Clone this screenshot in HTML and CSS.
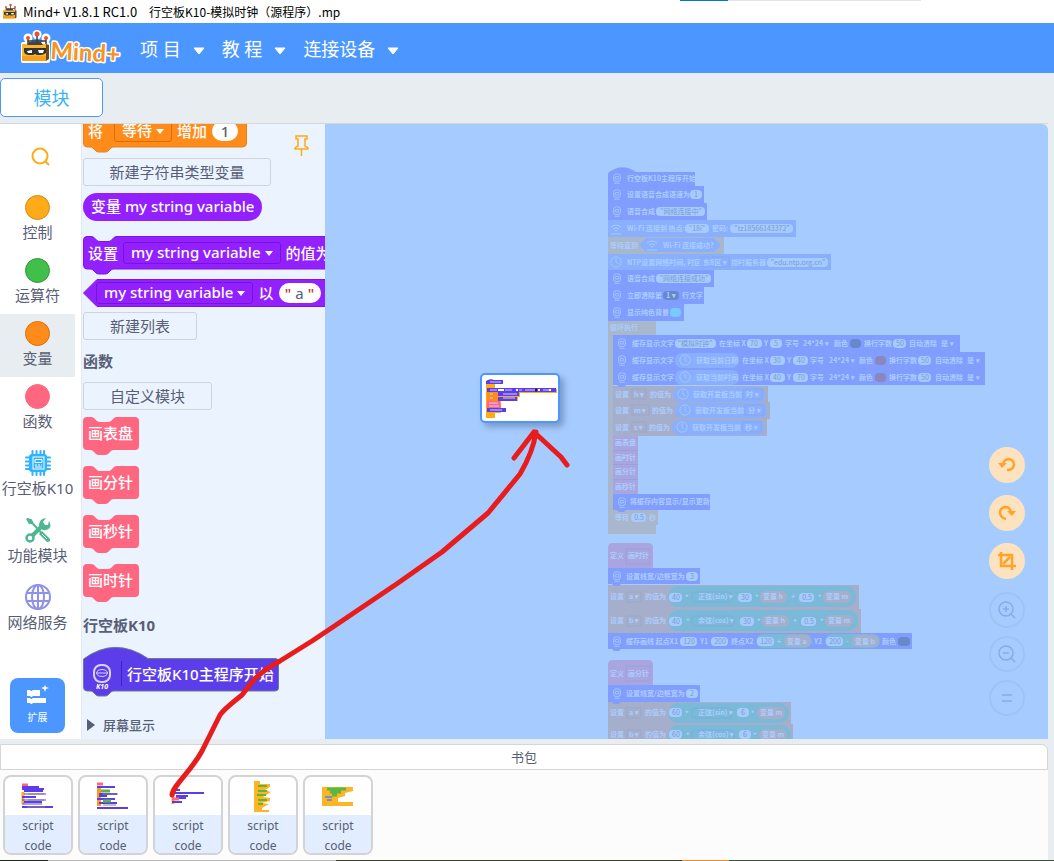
FILE: index.html
```
<!DOCTYPE html>
<html lang="zh-CN">
<head>
<meta charset="utf-8">
<title>Mind+ V1.8.1 RC1.0 行空板K10-模拟时钟（源程序）.mp</title>
<link rel="stylesheet" href="styles.css">
</head>
<body>
<svg class="defs" aria-hidden="true">
  <symbol id="robot" viewBox="0 0 32 34">
    <path d="M8 13V9M17 9V4M25 13V9" stroke="#fff" stroke-width="5"/>
    <circle cx="8" cy="8" r="4.500" fill="#fff"/><circle cx="17" cy="4.500" r="4.500" fill="#fff"/><circle cx="26" cy="8" r="4.500" fill="#fff"/>
    <rect x="1" y="12" width="29" height="21" rx="2" fill="#fff"/>
    <path d="M8 14V8M17 13V5M26 14V8M8 11h18" stroke="#3b3b3b" stroke-width="1.500" fill="none"/>
    <circle cx="8" cy="8" r="2" fill="#e9532b"/><circle cx="17" cy="4" r="2.500" fill="#e9532b"/><circle cx="26" cy="8" r="2" fill="#e9532b"/>
    <path d="M2 14h24v17H2z" fill="#fbb62b"/><path d="M26 14l3 1v14l-3 2z" fill="#6b4a20"/>
    <path d="M2 26h24v5H2z" fill="#f6a01d"/><path d="M9 12h12l2 3H7z" fill="#444"/>
    <path d="M4 18h22v5q-3 2-6 2h-3l-2-1-2 1h-4q-4 0-5-3z" fill="#333"/>
    <path d="M7 21l5-1v3H8zM18 20h6l-1 3h-4z" fill="#fff"/>
  </symbol>
  <symbol id="k10" viewBox="0 0 12 14">
    <rect x="2" y="1" width="8" height="9" rx="3" fill="none" stroke="currentColor"/>
    <path d="M4 4h4v3H4zM3 12h6" fill="none" stroke="currentColor"/>
  </symbol>
  <symbol id="clock" viewBox="0 0 12 12">
    <circle cx="6" cy="6" r="5.200" fill="none" stroke="currentColor" stroke-width=".8"/>
    <path d="M6 2v4l2 2" fill="none" stroke="currentColor" stroke-width=".8"/>
  </symbol>
  <symbol id="wifi" viewBox="0 0 12 12">
    <path d="M1 4q5-4 10 0M3 6q3-2.500 6 0M5 8q1-1 2 0M1 11h10" fill="none" stroke="currentColor"/>
  </symbol>
</svg>

<div class="titlebar">
  <svg class="app-icon" aria-hidden="true"><use href="#robot"/></svg>
  <span>Mind+ V1.8.1 RC1.0</span><span>行空板K10-模拟时钟（源程序）.mp</span>
</div>

<header class="header">
  <svg class="logo" viewBox="0 0 100 40" role="img" aria-label="Mind+">
    <use href="#robot" width="32" height="34"/>
    <text class="logo-text" x="30" y="29" transform="rotate(3 30 29)">Mind+</text>
  </svg>
  <nav class="menu">
    <button>项 目<svg class="caret" viewBox="0 0 12 8"><path d="M1 1h10L6 7z"/></svg></button>
    <button>教 程<svg class="caret" viewBox="0 0 12 8"><path d="M1 1h10L6 7z"/></svg></button>
    <button>连接设备<svg class="caret" viewBox="0 0 12 8"><path d="M1 1h10L6 7z"/></svg></button>
  </nav>
</header>

<div class="tabs"><button class="tab">模块</button></div>

<main class="editor">
  <nav class="categories">
    <button class="search" aria-label="搜索"><svg viewBox="0 0 20 20"><circle cx="9" cy="9" r="7.500"/><path d="M14 14l4 4"/></svg></button>
    <button class="category"><i class="dot control"></i>控制</button>
    <button class="category"><i class="dot operator"></i>运算符</button>
    <button class="category selected"><i class="dot variable"></i>变量</button>
    <button class="category"><i class="dot function"></i>函数</button>
    <button class="category pictured">
      <svg viewBox="0 0 26 26"><path d="M7.500 1v24M11.500 1v24M15.500 1v24M19 1v24M1 7.500h24M1 11.500h24M1 15.500h24M1 19h24" stroke="#2fb3ff" stroke-width="2" stroke-linecap="round"/><rect x="4" y="4" width="18" height="18" rx="3" fill="#2fb3ff"/><rect x="8" y="7" width="11" height="12" fill="none" stroke="#fff"/><path d="M10 9.500h7v3h-7zM10 15h2m1 0h2m1 0h1M10 17h7" fill="none" stroke="#fff"/></svg>行空板K10</button>
    <button class="category pictured">
      <svg viewBox="0 0 26 26"><path d="M2 2l4 1 2 4 12 13" fill="none" stroke="#4db890" stroke-width="2"/><path d="M1 2l2-1 4 3v3H4z" fill="#4db890"/><path d="M14 17l3-3 8 8q1 3-3 3z" fill="#4db890"/><path d="M5 21L18 8" stroke="#4db890" stroke-width="4"/><path d="M24 4q4 7-3 9-6 1-7-5 0-6 7-7l-3 4 2 3h3z" fill="#4db890"/><circle cx="5" cy="21" r="3.500" fill="#fff" stroke="#4db890" stroke-width="2.500"/><path d="M17 17l5 5" stroke="#fff"/></svg>功能模块</button>
    <button class="category pictured">
      <svg viewBox="0 0 26 26" fill="none" stroke="#8f92ea" stroke-width="2"><circle cx="13" cy="13" r="12"/><ellipse cx="13" cy="13" rx="6" ry="12"/><path d="M13 1v24M2 9h22M2 17h22"/></svg>网络服务</button>
    <button class="extension">
      <svg viewBox="0 0 24 20" fill="#fff"><path d="M1 5h3q1 2 3 0h7v6H7q-2 2-3 0H1zM1 13h3q1 2 3 0h13v5H7q-2 2-3 0H1z"/><path d="M19 0l1 2 3 1-3 1-1 3-1-3-3-1 3-1z"/></svg>扩展</button>
  </nav>

  <section class="flyout">
    <div class="block change">
      <svg class="shape" width="164" height="39"><path fill="#ff8c1a" stroke="#f08010" d="M.5 0H163.500V29q0 4-4 4H31q-2 0-3 1l-3 3q-1 1-3 1h-6q-2 0-3-1l-3-3q-1-1-3-1H4q-3.500 0-3.500-4z"/></svg>
      <span>将</span><button class="field">等待<svg viewBox="0 0 8 5"><path d="M0 0h8L4 5z"/></svg></button><span>增加</span><input class="pill number" aria-label="增加" value="1">
    </div>
    <button class="make wide">新建字符串类型变量</button>
    <div class="block reporter">变量 my string variable</div>
    <div class="block set">
      <svg class="shape" width="300" height="39"><path fill="#9320ff" stroke="#7f14e4" d="M.5 4Q.5.5 4 .5h4q2 0 3 1l3 3q1 1 3 1h8q2 0 3-1l3-3q1-1 3-1H299.500V33H31q-2 0-3 1l-3 3q-1 1-3 1h-6q-2 0-3-1l-3-3q-1-1-3-1H4q-3.500 0-3.500-4z"/></svg>
      <span>设置</span><button class="field">my string variable<svg viewBox="0 0 8 5"><path d="M0 0h8L4 5z"/></svg></button><span>的值为</span>
    </div>
    <div class="block join">
      <svg class="shape" width="300" height="28"><path fill="#9320ff" stroke="#7f14e4" d="M.5 14L14 .5H299V27.500H14z"/></svg>
      <button class="field">my string variable<svg viewBox="0 0 8 5"><path d="M0 0h8L4 5z"/></svg></button><span>以</span><span class="pill string"><b>"</b>a<b>"</b></span>
    </div>
    <button class="make">新建列表</button>
    <h2>函数</h2>
    <button class="make middle">自定义模块</button>
    <div class="block call"><svg class="shape" width="56" height="39"><path id="call-shape" fill="#ff6680" d="M0 4Q0 0 4 0h4q2 0 3 1l3 3q1 1 3 1h8q2 0 3-1l3-3q1-1 3-1H52q4 0 4 4V29q0 4-4 4H31q-2 0-3 1l-3 3q-1 1-3 1h-6q-2 0-3-1l-3-3q-1-1-3-1H4q-4 0-4-4z"/></svg>画表盘</div>
    <div class="block call"><svg class="shape" width="56" height="39"><use href="#call-shape"/></svg>画分针</div>
    <div class="block call"><svg class="shape" width="56" height="39"><use href="#call-shape"/></svg>画秒针</div>
    <div class="block call"><svg class="shape" width="56" height="39"><use href="#call-shape"/></svg>画时针</div>
    <h2>行空板K10</h2>
    <div class="block hat">
      <svg class="shape" width="196" height="50"><path fill="#5b3ee9" stroke="#6d7b90" d="M.5 12Q32-11 65 11.500H192q3.500 0 3.500 3V41q0 3-3.500 3H31q-2 0-3 1l-3 3q-1 1-3 1h-6q-2 0-3-1l-3-3q-1-1-3-1H4q-3.500 0-3.500-4z"/><path d="M38.500 14v25" stroke="#3f22c6"/></svg>
      <svg class="k10-mark" viewBox="0 0 20 26"><rect x="2" y="1" width="16" height="17" rx="7" fill="none" stroke="#d9d3ff" stroke-width="2"/><ellipse cx="10" cy="9" rx="5.500" ry="3.500" fill="none" stroke="#d9d3ff"/><path d="M5 9h10" stroke="#d9d3ff"/><text x="4" y="25">K10</text></svg>
      <span>行空板K10主程序开始</span>
    </div>
    <button class="fold"><svg viewBox="0 0 8 12"><path d="M0 0l8 6-8 6z"/></svg>屏幕显示</button>
    <button class="pin" aria-label="固定"><svg viewBox="0 0 16 22"><path d="M2 1h11v3h-2v7q3 1 3 3H1q0-2 3-3V4H2zM7.500 14v7"/></svg></button>
  </section>

  <section class="workspace">
    <svg class="scripts" width="722" height="615" viewBox="326 124 722 615">
      <g transform="translate(608 167)"><path class="k" d="M0 6Q14-5 28 5H87V20H0z"/><use href="#k10" x="3" y="6" width="12" height="12"/><text x="19" y="14">行空板K10主程序开始</text></g>
      <g transform="translate(608 186)"><path class="k" d="M0 0H96V17H0z"/><use href="#k10" x="3" y="3" width="12" height="12"/><text x="19" y="11">设置语音合成语速为</text><rect class="i" x="82" y="4" width="12" height="9" rx="4"/><text class="v" x="88" y="11">1</text></g>
      <g transform="translate(608 203)"><path class="k" d="M0 0H99V17H0z"/><use href="#k10" x="3" y="3" width="12" height="12"/><text x="19" y="11">语音合成</text><rect class="i" x="48" y="4" width="49" height="9" rx="4"/><text class="v" x="73" y="11">"网络连接中"</text></g>
      <g transform="translate(608 220)"><path class="w" d="M0 0H188V17H0z"/><use href="#wifi" x="2" y="3" width="12" height="12"/><text x="19" y="11">Wi-Fi 连接到 热点:</text><rect class="i" x="77" y="4" width="24" height="9" rx="4"/><text class="v" x="89" y="11">"18i"</text><text x="104" y="11">密码:</text><rect class="i" x="122" y="4" width="63" height="9" rx="4"/><text class="v" x="154" y="11">"tz18566143372"</text></g>
      <g transform="translate(608 237)"><path class="c" d="M0 0H116V17H0z"/><text x="2" y="11">等待直到</text><path class="w" d="M31 8l7-7h68l7 7-7 7H38z"/><use href="#wifi" x="38" y="2" width="12" height="12"/><text x="55" y="11">Wi-Fi 连接成功?</text></g>
      <g transform="translate(608 254)"><path class="w" d="M0 0H223V16H0z"/><use href="#clock" x="2" y="2" width="12" height="12"/><text x="19" y="11">NTP设置网络时间, 时区</text><rect class="f" x="92" y="3" width="29" height="10"/><text x="95" y="11">东8区 ▾</text><text x="123" y="11">授时服务器</text><rect class="i" x="159" y="4" width="61" height="9" rx="4"/><text class="v" x="190" y="11">"edu.ntp.org.cn"</text></g>
      <g transform="translate(608 270)"><path class="k" d="M0 0H106V17H0z"/><use href="#k10" x="3" y="3" width="12" height="12"/><text x="19" y="11">语音合成</text><rect class="i" x="48" y="4" width="55" height="9" rx="4"/><text class="v" x="76" y="11">"网络连接成功"</text></g>
      <g transform="translate(608 287)"><path class="k" d="M0 0H96V17H0z"/><use href="#k10" x="3" y="3" width="12" height="12"/><text x="19" y="11">立即清除第</text><rect class="d" x="55" y="4" width="16" height="9" rx="4"/><text x="58" y="11">1 ▾</text><text x="74" y="11">行文字</text></g>
      <g transform="translate(608 304)"><path class="k" d="M0 0H76V17H0z"/><use href="#k10" x="3" y="3" width="12" height="12"/><text x="19" y="11">显示纯色背景</text><rect fill="#78cbff" x="62" y="4" width="11" height="9" rx="4"/></g>
      <path class="c" d="M608 321h48v14H613v189h43v10H608z"/><text x="610" y="330">循环执行</text>

      <g transform="translate(613 335)"><path class="k" d="M0 0H347V17H0z"/><use href="#k10" x="3" y="3" width="12" height="12"/><text x="19" y="11">缓存显示文字</text><rect class="i" x="62" y="4" width="41" height="9" rx="4"/><text class="v" x="82" y="11">"模拟时钟"</text><text x="106" y="11">在坐标 X</text><rect class="i" x="134" y="4" width="15" height="9" rx="4"/><text class="v" x="141" y="11">70</text><text x="151" y="11">Y</text><rect class="i" x="157" y="4" width="12" height="9" rx="4"/><text class="v" x="163" y="11">5</text><text x="172" y="11">字号</text><text x="190" y="11">24*24 ▾</text><text x="221" y="11">颜色</text><rect class="d" x="237" y="4" width="11" height="9" rx="4"/><text x="251" y="11">换行字数</text><rect class="i" x="280" y="4" width="13" height="9" rx="4"/><text class="v" x="287" y="11">50</text><text x="296" y="11">自动清除</text><text x="328" y="11">是 ▾</text></g>
      <g transform="translate(613 352)"><path class="k" d="M0 0H372V17H0z"/><use href="#k10" x="3" y="3" width="12" height="12"/><text x="19" y="11">缓存显示文字</text><rect class="w" x="62" y="1" width="64" height="15" rx="7"/><use href="#clock" x="66" y="2" width="12" height="12"/><text x="83" y="11">获取当前日期</text><text x="129" y="11">在坐标 X</text><rect class="i" x="157" y="4" width="15" height="9" rx="4"/><text class="v" x="164" y="11">30</text><text x="174" y="11">Y</text><rect class="i" x="180" y="4" width="15" height="9" rx="4"/><text class="v" x="188" y="11">40</text><text x="197" y="11">字号</text><text x="216" y="11">24*24 ▾</text><text x="246" y="11">颜色</text><rect class="r" x="262" y="4" width="11" height="9" rx="4"/><text x="276" y="11">换行字数</text><rect class="i" x="305" y="4" width="13" height="9" rx="4"/><text class="v" x="312" y="11">50</text><text x="322" y="11">自动清除</text><text x="354" y="11">是 ▾</text></g>
      <g transform="translate(613 386)"><path class="a" d="M0 0H155V17H0z"/><text x="2" y="11">设置</text><rect class="f" x="19" y="3" width="14" height="10"/><text x="21" y="11">h ▾</text><text x="37" y="11">的值为</text><rect class="w" x="60" y="1" width="92" height="15" rx="7"/><use href="#clock" x="64" y="2" width="12" height="12"/><text x="80" y="11">获取开发板当前</text><rect class="f" x="130" y="3" width="19" height="10"/><text x="133" y="11">时 ▾</text></g>
      <g transform="translate(613 369)"><path class="k" d="M0 0H372V16H13l-2 2H6l-2-2H0z"/><use href="#k10" x="3" y="3" width="12" height="12"/><text x="19" y="11">缓存显示文字</text><rect class="w" x="62" y="1" width="64" height="15" rx="7"/><use href="#clock" x="66" y="2" width="12" height="12"/><text x="83" y="11">获取当前时间</text><text x="129" y="11">在坐标 X</text><rect class="i" x="157" y="4" width="15" height="9" rx="4"/><text class="v" x="164" y="11">40</text><text x="174" y="11">Y</text><rect class="i" x="180" y="4" width="15" height="9" rx="4"/><text class="v" x="188" y="11">70</text><text x="197" y="11">字号</text><text x="216" y="11">24*24 ▾</text><text x="246" y="11">颜色</text><rect class="r" x="262" y="4" width="11" height="9" rx="4"/><text x="276" y="11">换行字数</text><rect class="i" x="305" y="4" width="13" height="9" rx="4"/><text class="v" x="312" y="11">50</text><text x="322" y="11">自动清除</text><text x="354" y="11">是 ▾</text></g>
      <g transform="translate(613 402)"><path class="a" d="M0 0H157V17H0z"/><text x="2" y="11">设置</text><rect class="f" x="19" y="3" width="17" height="10"/><text x="21" y="11">m ▾</text><text x="39" y="11">的值为</text><rect class="w" x="62" y="1" width="92" height="15" rx="7"/><use href="#clock" x="66" y="2" width="12" height="12"/><text x="82" y="11">获取开发板当前</text><rect class="f" x="132" y="3" width="19" height="10"/><text x="135" y="11">分 ▾</text></g>
      <g transform="translate(613 419)"><path class="a" d="M0 0H154V17H0z"/><text x="2" y="11">设置</text><rect class="f" x="19" y="3" width="14" height="10"/><text x="21" y="11">s ▾</text><text x="36" y="11">的值为</text><rect class="w" x="59" y="1" width="92" height="15" rx="7"/><use href="#clock" x="63" y="2" width="12" height="12"/><text x="79" y="11">获取开发板当前</text><rect class="f" x="129" y="3" width="19" height="10"/><text x="132" y="11">秒 ▾</text></g>
      <path class="p" d="M613 436h25v58h-25z"/><path class="e" d="M613 450.500h25M613 464.500h25M613 479.500h25"/>
      <text x="615" y="445">画表盘</text><text x="615" y="460">画时针</text><text x="615" y="474">画分针</text><text x="615" y="489">画秒针</text>
      <path class="c" d="M613 510h45v15h-45z"/><text x="615" y="520">等待</text><rect class="i" x="631" y="513" width="15" height="9" rx="4"/><text class="v" x="639" y="520">0.5</text><text x="649" y="520">秒</text>
      <g transform="translate(613 494)"><path class="k" d="M0 0H97V16H13l-2 2H6l-2-2H0z"/><use href="#k10" x="3" y="3" width="12" height="12"/><text x="17" y="10">将缓存内容显示/显示更新</text></g>

      <g transform="translate(608 543)"><path class="p" d="M0 5Q0 0 5 0H40Q45 0 45 5V25H0z"/><rect class="f" x="18" y="6" width="24" height="15"/><text x="2" y="15">定义</text><text x="20" y="15">画时针</text></g>
      <g transform="translate(608 585)"><path class="a" d="M0 0H251V24H0z"/><text x="2" y="14">设置</text><rect class="f" x="19" y="7" width="14" height="10"/><text x="21" y="14">a ▾</text><text x="37" y="14">的值为</text><rect class="g" x="60" y="1" width="188" height="21" rx="10"/><rect class="i" x="61" y="8" width="13" height="9" rx="4"/><text class="v" x="68" y="15">40</text><text x="77" y="15">*</text><rect class="e" x="84" y="7" width="40" height="10" rx="3"/><text x="90" y="14">正弦(sin) ▾</text><rect class="i" x="130" y="8" width="14" height="9" rx="4"/><text class="v" x="137" y="15">30</text><text x="147" y="15">*</text><rect class="a" x="152" y="6" width="27" height="12" rx="6"/><text x="155" y="14">变量 h</text><text x="183" y="14">+</text><rect class="i" x="191" y="8" width="15" height="9" rx="4"/><text class="v" x="199" y="15">0.5</text><text x="210" y="15">*</text><rect class="a" x="215" y="6" width="28" height="12" rx="6"/><text x="218" y="14">变量 m</text></g>
      <g transform="translate(608 609)"><path class="a" d="M0 0H253V24H0z"/><text x="2" y="14">设置</text><rect class="f" x="19" y="7" width="14" height="10"/><text x="21" y="14">b ▾</text><text x="37" y="14">的值为</text><rect class="g" x="60" y="1" width="190" height="21" rx="10"/><rect class="i" x="61" y="8" width="13" height="9" rx="4"/><text class="v" x="68" y="15">40</text><text x="78" y="15">*</text><rect class="e" x="84" y="7" width="42" height="10" rx="3"/><text x="90" y="14">余弦(cos) ▾</text><rect class="i" x="132" y="8" width="14" height="9" rx="4"/><text class="v" x="139" y="15">30</text><text x="149" y="15">*</text><rect class="a" x="154" y="6" width="27" height="12" rx="6"/><text x="157" y="14">变量 h</text><text x="185" y="14">+</text><rect class="i" x="193" y="8" width="15" height="9" rx="4"/><text class="v" x="201" y="15">0.5</text><text x="212" y="15">*</text><rect class="a" x="217" y="6" width="28" height="12" rx="6"/><text x="220" y="14">变量 m</text></g>
      <g transform="translate(608 568)"><path class="k" d="M0 0H92V16H13l-2 2H6l-2-2H0z"/><use href="#k10" x="3" y="3" width="12" height="12"/><text x="18" y="11">设置线宽/边框宽为</text><rect class="i" x="78" y="4" width="12" height="9" rx="4"/><text class="v" x="84" y="11">3</text></g>
      <g transform="translate(608 633)"><path class="k" d="M0 0H304V16H13l-2 2H6l-2-2H0z"/><use href="#k10" x="3" y="3" width="12" height="12"/><text x="18" y="11">缓存画线 起点X1</text><rect class="i" x="72" y="4" width="17" height="9" rx="4"/><text class="v" x="81" y="11">120</text><text x="92" y="11">Y1</text><rect class="i" x="103" y="4" width="17" height="9" rx="4"/><text class="v" x="112" y="11">200</text><text x="123" y="11">终点X2</text><rect class="g" x="148" y="1" width="56" height="14" rx="7"/><rect class="i" x="149" y="4" width="17" height="9" rx="4"/><text class="v" x="158" y="11">120</text><text x="169" y="11">+</text><rect class="a" x="176" y="2" width="27" height="12" rx="6"/><text x="179" y="11">变量 a</text><text x="206" y="11">Y2</text><rect class="g" x="217" y="1" width="55" height="14" rx="7"/><rect class="i" x="218" y="4" width="17" height="9" rx="4"/><text class="v" x="227" y="11">200</text><text x="238" y="11">-</text><rect class="a" x="244" y="2" width="27" height="12" rx="6"/><text x="247" y="11">变量 b</text><text x="274" y="11">颜色</text><rect class="d" x="290" y="4" width="12" height="9" rx="4"/></g>

      <g transform="translate(608 660)"><path class="p" d="M0 5Q0 0 5 0H40Q45 0 45 5V26H0z"/><rect class="f" x="18" y="6" width="24" height="15"/><text x="2" y="16">定义</text><text x="20" y="16">画分针</text></g>
      <g transform="translate(608 702)"><path class="a" d="M0 0H183V22H0z"/><text x="2" y="13">设置</text><rect class="f" x="19" y="6" width="14" height="10"/><text x="21" y="13">a ▾</text><text x="37" y="13">的值为</text><rect class="g" x="60" y="1" width="121" height="20" rx="10"/><rect class="i" x="61" y="6" width="13" height="9" rx="4"/><text class="v" x="68" y="13">60</text><text x="77" y="14">*</text><rect class="e" x="84" y="6" width="40" height="10" rx="3"/><text x="90" y="13">正弦(sin) ▾</text><rect class="i" x="129" y="6" width="12" height="9" rx="4"/><text class="v" x="135" y="13">6</text><text x="143" y="14">*</text><rect class="a" x="149" y="5" width="28" height="12" rx="6"/><text x="152" y="13">变量 m</text></g>
      <g transform="translate(608 724)"><path class="a" d="M0 0H185V22H0z"/><text x="2" y="13">设置</text><rect class="f" x="19" y="6" width="14" height="10"/><text x="21" y="13">b ▾</text><text x="37" y="13">的值为</text><rect class="g" x="60" y="1" width="123" height="20" rx="10"/><rect class="i" x="61" y="6" width="13" height="9" rx="4"/><text class="v" x="68" y="13">60</text><text x="78" y="14">*</text><rect class="e" x="84" y="6" width="42" height="10" rx="3"/><text x="90" y="13">余弦(cos) ▾</text><rect class="i" x="131" y="6" width="12" height="9" rx="4"/><text class="v" x="137" y="13">6</text><text x="145" y="14">*</text><rect class="a" x="151" y="5" width="28" height="12" rx="6"/><text x="154" y="13">变量 m</text></g>
      <g transform="translate(608 685)"><path class="k" d="M0 0H92V17H13l-2 2H6l-2-2H0z"/><use href="#k10" x="3" y="3" width="12" height="12"/><text x="18" y="11">设置线宽/边框宽为</text><rect class="i" x="78" y="4" width="12" height="9" rx="4"/><text class="v" x="84" y="11">2</text></g>
    </svg>

    <div class="dragged">
      <svg width="74" height="44" viewBox="0 0 74 44">
        <path fill="#5b3ee9" d="M3 5q4-3 8-1h9v4H3z"/>
        <path fill="#ffab19" d="M3 8h9v5h62v4H37v4h-2v4H18v12H12v3H3z"/><path fill="#fff" d="M18 25h56v12H18zM37 17h37v8H37zM12 9h62v3H12z"/>
        <path fill="#5b3ee9" d="M4 12h69v4H4zM15 16h21v4H15zM15 21h19v4H15zM4 32h19v4H4z"/>
        <path fill="#ff8c1a" d="M4 16h11v9H4z"/><path fill="#ff6680" d="M4 25h13l1 7H4z"/><path fill="#ffab19" d="M3 36h9v6H3z"/>
        <path stroke="#d6d0ff" d="M7 14h7m8 0h7m7 0h3m3 0h12m6 0h8M7 6h11M7 18h3M7 22h3M6 27h9M6 30h10M7 34h12M20 18h14M20 22h12"/>
        <path stroke="#fff" stroke-width="2" d="M15 14h6m12 0h2m20 0h2m9 0h2"/><path stroke="#222" stroke-width="3" d="M52 14h2"/>
      </svg>
    </div>

    <div class="tools">
      <button aria-label="撤销"><svg viewBox="0 0 20 20"><path d="M6 9q1-5 6-5 5 1 5 6-1 5-7 5" /><path class="solid" d="M1 8h9l-5 5z"/></svg></button>
      <button aria-label="重做"><svg viewBox="0 0 20 20"><path d="M14 9q-1-5-6-5-5 1-5 6 1 5 6 6"/><path class="solid" d="M10 8h9l-4 5z"/></svg></button>
      <button aria-label="裁剪"><svg viewBox="0 0 20 20"><path d="M4 1v14h15M1 4h14v15M6 13l7-7"/></svg></button>
      <button class="zoom first" aria-label="放大"><svg viewBox="0 0 20 20"><circle cx="9" cy="9" r="7"/><path d="M14 14l4 4M6 9h6M9 6v6"/></svg></button>
      <button class="zoom" aria-label="缩小"><svg viewBox="0 0 20 20"><circle cx="9" cy="9" r="7"/><path d="M14 14l4 4M6 9h6"/></svg></button>
      <button class="zoom" aria-label="还原"><svg viewBox="0 0 20 20"><path d="M5 7h10M5 13h10"/></svg></button>
    </div>
  </section>
</main>

<section class="backpack">
  <h3>书包</h3>
  <div class="cards">
    <button class="card"><svg viewBox="0 0 66 36"><path stroke="#ff6680" stroke-width="3" d="M17 6h6"/><path stroke="#ffab19" stroke-width="3" d="M18 13v12"/><path stroke="#5b3ee9" stroke-width="2" d="M17 8h17M17 10h22M19 12h19M17 18h14M19 23h18M17 28h31"/><path stroke="#5b3ee9" d="M19 15h22M17 21h24M17 25h20"/><path stroke="#8a8478" d="M23 15h16M23 21h16M22 28h18"/></svg><span>script<br>code</span></button>
    <button class="card"><svg viewBox="0 0 66 36"><path stroke="#ff6680" stroke-width="3" d="M17 5h6"/><path stroke="#ff9a19" stroke-width="4" d="M19 9v18"/><path stroke="#5b3ee9" stroke-width="2" d="M17 8h18M19 15h18M19 17h8M17 20h18M19 24h18M17 29h31"/><path stroke="#59b83f" stroke-width="3" d="M21 12h9M23 22h8"/><path stroke="#8a8478" d="M23 15h15M23 26h13"/></svg><span>script<br>code</span></button>
    <button class="card"><svg viewBox="0 0 66 36"><path stroke="#ffab19" stroke-width="3" d="M18 13v12"/><path stroke="#5b3ee9" stroke-width="2" d="M18 11h7M19 14h30M21 17h12M21 19h10M17 23h10"/><path stroke="#ff6680" stroke-width="3" d="M17 20h7"/></svg><span>script<br>code</span></button>
    <button class="card"><svg viewBox="0 0 66 36"><path fill="#ffb426" d="M24 2h6v3h10v3l-5 3 6 2-8 5 7 1v3l-8 2 7 1-7 4v2h7v2H24z"/><path stroke="#59b83f" stroke-width="2" d="M28 7h9M28 12h9M27 16h9M28 21h9M28 25h5"/></svg><span>script<br>code</span></button>
    <button class="card"><svg viewBox="0 0 66 36"><path fill="#ffb426" d="M17 8h31v4l-8 2v3l-7 2v4h15v4H17z"/><path stroke="#59b83f" stroke-width="3" d="M22 10h19M25 13h11M27 16h5"/><path stroke="#7790bd" stroke-width="2" d="M20 18h7M22 21h5"/></svg><span>script<br>code</span></button>
  </div>
  <div class="edge"></div>
</section>

<svg class="arrow" width="600" height="861" aria-hidden="true"><path d="M172 795C173 785 190 773 202 751L220 715Q223 710 242 695L252 682Q260 672 280 661L312 641 330 629 398 583 442 552 488 513 520 474Q533 452 536 432M514 458L534 432 561 457 567 465"/></svg>
</body>
</html>
```
FILE: styles.css
```
* { box-sizing: border-box; }
body {
  position: relative;
  display: flex;
  flex-direction: column;
  min-height: 100vh;
  margin: 0;
  overflow: hidden;
  background: #e8edf1;
  color: #575e75;
  font: 15px/20px "Noto Sans", "Noto Sans CJK SC", sans-serif;
}
button, input { margin: 0; padding: 0; border: 0; background: none; color: inherit; font: inherit; }
button { cursor: pointer; }
h2, h3 { margin: 0; }
.defs { position: absolute; width: 0; height: 0; }

.titlebar {
  display: flex;
  align-items: center;
  gap: 12px;
  height: 23px;
  background: linear-gradient(90deg, #0078d7 48px, #e5e5e5 48px) 680px 0 / 241px 1px no-repeat #fff;
  color: #000;
  font: 12px/20px "Noto Sans CJK SC", sans-serif;
}
.titlebar span:first-of-type { min-width: 114px; font-size: 13px; }
.app-icon { width: 16px; height: 17px; margin: 0 -7px 0 2px; }

.header { display: flex; align-items: center; height: 50px; background: #4c97ff; }
.logo { width: 100px; height: 40px; margin: 3px 20px 0 20px; overflow: visible; }
.logo-text {
  fill: #f7931e;
  stroke: #fff;
  stroke-width: 3px;
  stroke-linejoin: round;
  paint-order: stroke;
  font: 700 24px Lato, sans-serif;
}
.menu { display: flex; gap: 17px; padding-top: 2px; color: #fff; font-size: 18px; }
.menu button { display: flex; align-items: center; gap: 12px; }
.caret { width: 12px; height: 8px; margin-top: 4px; fill: #fff; stroke: #fff; stroke-linejoin: round; }

.tabs { height: 50px; padding-top: 5px; }
.tab {
  width: 103px;
  height: 39px;
  border: 1px solid #4c97ff;
  border-radius: 5px;
  background: #fff;
  color: #3bb3f5;
  font-size: 18px;
}

.editor {
  display: flex;
  flex: 1;
  min-height: 0;
  margin-right: 6px;
  border-top: 1px solid #d5d9dd;
}
.categories { display: flex; flex-direction: column; flex: none; width: 82px; border-right: 1px solid #e4e9ef; background: #fff; }
.search { width: 82px; height: 64px; padding-top: 5px; }
.search svg { width: 20px; height: 20px; fill: none; stroke: #ffab19; stroke-width: 2; }
.category {
  display: flex;
  flex-direction: column;
  align-items: center;
  gap: 2px;
  width: 75px;
  height: 63px;
  padding-top: 7px;
  white-space: nowrap;
}
.selected { background: #e8edf1; }
.pictured { height: 67px; padding-top: 10px; }
.pictured svg { flex: none; width: 26px; height: 26px; }
.dot { flex: none; width: 25px; height: 25px; border: 1px solid; border-radius: 50%; }
.control { border-color: #cf8b17; background: #ffab19; }
.operator { border-color: #389438; background: #40bf4a; }
.variable { border-color: #db6e00; background: #ff8c1a; }
.function { border-color: #ff6680; background: #ff6680; }
.extension {
  display: flex;
  flex-direction: column;
  align-items: center;
  justify-content: center;
  gap: 2px;
  width: 55px;
  height: 55px;
  margin: auto 0 6px 10px;
  border-radius: 8px;
  background: #4c97ff;
  color: #fff;
  font-size: 10px;
}
.extension svg { width: 24px; height: 20px; }

.flyout {
  position: relative;
  display: flex;
  flex-direction: column;
  align-items: flex-start;
  flex: none;
  width: 243px;
  padding-left: 1px;
  overflow: hidden;
  background: #ebf3fe;
}
.flyout > * { flex: none; }
.flyout h2 { height: 20px; margin: 11px 0 11px; font-size: 15px; line-height: 20px; }
.make { width: 114px; height: 28px; border: 1px solid #cfd3da; border-radius: 3px; }
.make.middle { width: 129px; margin-bottom: 7px; }
.make.wide { width: 188px; margin: 11px 0 7px; }
.block {
  position: relative;
  z-index: 0;
  display: flex;
  align-items: center;
  height: 33px;
  padding: 0 5px 2px;
  color: #fff;
  font-weight: 500;
  white-space: nowrap;
}
.shape { position: absolute; left: 0; top: 0; z-index: -1; overflow: visible; }
.change { margin-top: -10px; gap: 5px; padding-bottom: 0; }
.change span:first-of-type { margin-right: 6px; }
.reporter { height: 28px; padding: 0 8px 2px; border-radius: 14px; background: #9320ff; }
.set { gap: 5px; margin: 15px 0 10px; padding-bottom: 0; }
.join { height: 28px; gap: 5px; margin-bottom: 5px; padding: 0 0 0 13px; }
.field {
  display: flex;
  align-items: center;
  gap: 4px;
  height: 22px;
  padding: 0 7px 2px;
  border: 1px solid #7a12dc;
  border-radius: 3px;
}
.change .field { border-color: #db6e00; }
.field svg { width: 8px; height: 5px; margin-top: 3px; fill: #fff; }
.pill { width: 26px; height: 20px; border-radius: 10px; background: #fff; color: #575e75; text-align: center; }
.string { display: flex; justify-content: center; gap: 4px; width: 42px; font-weight: 400; }
.string b { color: #b33; font-weight: 500; }
.call { width: 56px; margin-bottom: 16px; }
.flyout .call + h2 { margin: 2px 0 12px; }
.hat { width: 196px; height: 50px; padding: 3px 5px 0 9px; gap: 15px; }
.k10-mark { width: 20px; height: 26px; margin-top: 6px; }
.k10-mark text { fill: #fff; font: italic 700 7px "Noto Sans", sans-serif; }
.fold { display: flex; align-items: center; gap: 8px; margin: 18px 0 0 4px; font-size: 13px; font-weight: 500; }
.fold svg { width: 8px; height: 12px; fill: #575e75; }
.pin { position: absolute; top: 11px; right: 15px; width: 16px; height: 22px; }
.pin svg { display: block; fill: none; stroke: #ffab19; stroke-width: 1.5px; }

.workspace { position: relative; flex: 1; min-width: 0; overflow: hidden; background: #a6cbff; border-top-right-radius: 6px; }
.scripts { position: absolute; left: 1px; top: 0; color: #a6cbff; }
.scripts text { fill: #abcdff; font-family: "Noto Sans CJK SC", sans-serif; font-size: 7px; font-weight: 700; }
.scripts .v { fill: #7a9ccf; font-weight: 400; text-anchor: middle; }
.k { fill: #819dfd; }
.w { fill: #8ab0fd; }
.c { fill: #a8b7cb; }
.a { fill: #a5afcb; }
.p { fill: #a8a5e0; }
.g { fill: #7bb9d8; }
.i { fill: #a6cbff; }
.d { fill: #668ac9; }
.r { fill: #8a87bd; }
.e, .f { fill: none; stroke: #7290d0; stroke-opacity: .25; }

.dragged {
  position: absolute;
  left: 155px;
  top: 249px;
  width: 80px;
  height: 50px;
  padding: 1px;
  border: 2px solid #4c97ff;
  border-radius: 5px;
  background: #fff;
  box-shadow: 4px 4px 6px #7899c8;
}
.dragged svg { display: block; }

.tools { position: absolute; right: 23px; bottom: 23px; display: flex; flex-direction: column; gap: 12px; }
.tools button {
  display: flex;
  align-items: center;
  justify-content: center;
  width: 36px;
  height: 36px;
  border-radius: 50%;
  background: #fde2bf;
}
.tools svg { width: 20px; height: 20px; fill: none; stroke: #ffa42b; stroke-width: 2.5px; }
.tools .solid { fill: #ffa42b; stroke: none; }
.tools .zoom { margin-top: -4px; border: 2px solid #9dc3f7; background: none; }
.tools .first { margin-top: 1px; }
.tools .zoom svg { stroke: #84ade8; stroke-width: 1.5px; }

.backpack { flex: none; margin-top: 5px; }
.backpack h3 {
  height: 26px;
  margin-right: 6px;
  border: 1px solid #d5d5d5;
  border-top-right-radius: 6px;
  background: #fff;
  font-size: 13px;
  font-weight: 400;
  line-height: 24px;
  text-align: center;
}
.cards { display: flex; gap: 5px; height: 90px; margin-right: 6px; padding: 5px 3px; background: #fcfcfc; }
.card {
  display: flex;
  flex-direction: column;
  width: 70px;
  height: 80px;
  overflow: hidden;
  border: 2px solid #d3d3d3;
  border-radius: 8px;
  background: #fff;
  font-size: 12px;
}
.card svg { flex: none; width: 66px; height: 38px; padding-top: 2px; }
.card span { width: 100%; flex: 1; padding-top: 1px; background: #e2eeff; }
.edge { height: 1px; background: linear-gradient(90deg, #1f2922 48px, #b5b5b5 48px 336px, #3c4128 336px 682px, #e8912c 682px 729px, #3c5138 729px); }

.arrow { position: absolute; left: 0; top: 0; pointer-events: none; }
.arrow path { fill: none; stroke: #e81c1c; stroke-width: 5px; stroke-linecap: round; stroke-linejoin: round; }
```
